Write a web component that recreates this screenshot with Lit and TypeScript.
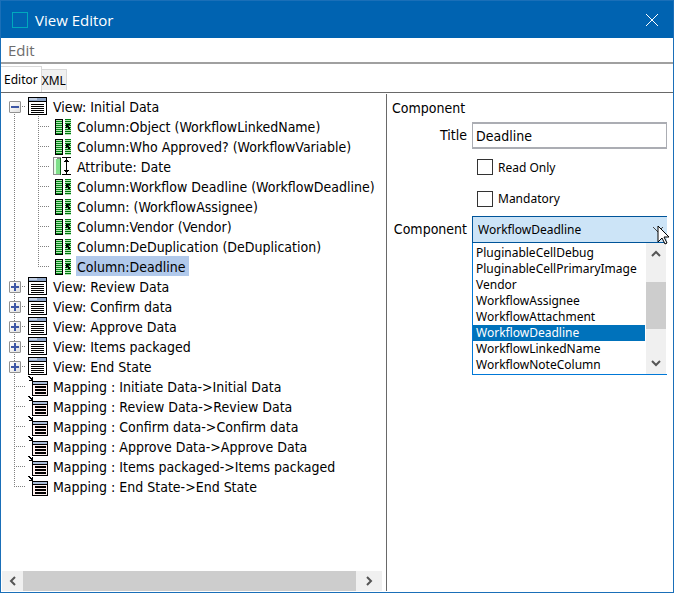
import { LitElement, html, css, svg, nothing } from "lit";
import { customElement, property, state } from "lit/decorators.js";

type IconName = "view" | "column" | "attribute" | "mapping";

interface Node {
  label: string;
  icon: IconName;
  children?: Node[];
  open?: boolean;
}

const TREE: Node[] = [
  {
    label: "View: Initial Data",
    icon: "view",
    open: true,
    children: [
      { label: "Column:Object (WorkflowLinkedName)", icon: "column" },
      { label: "Column:Who Approved? (WorkflowVariable)", icon: "column" },
      { label: "Attribute: Date", icon: "attribute" },
      { label: "Column:Workflow Deadline (WorkflowDeadline)", icon: "column" },
      { label: "Column: (WorkflowAssignee)", icon: "column" },
      { label: "Column:Vendor (Vendor)", icon: "column" },
      { label: "Column:DeDuplication (DeDuplication)", icon: "column" },
      { label: "Column:Deadline", icon: "column" },
    ],
  },
  { label: "View: Review Data", icon: "view", children: [] },
  { label: "View: Confirm data", icon: "view", children: [] },
  { label: "View: Approve Data", icon: "view", children: [] },
  { label: "View: Items packaged", icon: "view", children: [] },
  { label: "View: End State", icon: "view", children: [] },
  { label: "Mapping : Initiate Data->Initial Data", icon: "mapping" },
  { label: "Mapping : Review Data->Review Data", icon: "mapping" },
  { label: "Mapping : Confirm data->Confirm data", icon: "mapping" },
  { label: "Mapping : Approve Data->Approve Data", icon: "mapping" },
  { label: "Mapping : Items packaged->Items packaged", icon: "mapping" },
  { label: "Mapping : End State->End State", icon: "mapping" },
];

const COMPONENTS = [
  "PluginableCellDebug",
  "PluginableCellPrimaryImage",
  "Vendor",
  "WorkflowAssignee",
  "WorkflowAttachment",
  "WorkflowDeadline",
  "WorkflowLinkedName",
  "WorkflowNoteColumn",
];

const ICONS = {
  view: svg`
    <rect x="0" y="1" width="19" height="18" fill="#000"/>
    <rect x="1" y="2" width="17" height="3" fill="#8fa6c8"/>
    <rect x="1" y="2" width="8" height="2" fill="#c3d0e4"/>
    <rect x="1" y="6" width="17" height="12" fill="#fff"/>
    <path d="M3 8.5h13M3 10.5h13M3 12.5h13M3 14.5h13M3 16.5h13" stroke="#000"/>`,
  column: svg`
    <rect x="3" y="3" width="8" height="16" fill="#000"/>
    <rect x="4" y="4" width="6" height="14" fill="#b4e6b4"/>
    <path d="M4 5.5h6M4 7.5h6M4 9.5h6M4 11.5h6M4 13.5h6M4 15.5h6M4 17.5h6" stroke="#008a14"/>
    <rect x="13" y="3" width="6" height="16" fill="#b4e6b4"/>
    <path d="M13 3.5h6M13 5.5h6M13 7.5h6M13 9.5h6M13 11.5h6M13 13.5h6M13 15.5h6M13 17.5h6" stroke="#007a10"/>
    <path d="M14 8h4v1h-2v1h1v1h1v2h-2v-2h-1v1h-1z" fill="#000"/>`,
  attribute: svg`
    <rect x="1" y="1" width="8" height="18" fill="#8c8c8c"/>
    <rect x="2" y="2" width="3" height="16" fill="#fff"/>
    <rect x="3" y="3" width="5" height="15" fill="#7fe08a"/>
    <rect x="2" y="3" width="2" height="15" fill="#e4fbe6"/>
    <rect x="8" y="2" width="1" height="17" fill="#0a5a14"/>
    <path d="M10 1.5h9M10 18.5h9" stroke="#000"/>
    <path d="M14.5 2v16M13 4.5h3M12 5.5h5M13 15.5h3M12 14.5h5" stroke="#000"/>`,
  mapping: svg`
    <path d="M0 0h2v1h-2zM1 1h2v1h-2zM2 2h2v1h-2zM4 1h1v4h-4v-1h2v-1h1z" fill="#000"/>
    <rect x="4" y="5" width="16" height="15" fill="#000"/>
    <rect x="5" y="6" width="14" height="2" fill="#a9bcd8"/>
    <rect x="5" y="9" width="14" height="10" fill="#fff0ee"/>
    <path d="M7 11h11M7 14h11M7 17h11" stroke="#000" stroke-width="2"/>`,
};

const chevron = (d: string) => html`
  <svg class="chevron" viewBox="0 0 10 10" aria-hidden="true">
    <path d=${d} fill="none" stroke="#555" stroke-width="2" />
  </svg>`;

@customElement("view-tree")
class ViewTree extends LitElement {
  @property({ attribute: false }) nodes: Node[] = [];
  @state() private selected = "Column:Deadline";

  static styles = css`
    :host { display: block; overflow: hidden; }
    ul { margin: 0; padding: 0; list-style: none; }
    .row { display: flex; height: 20px; }
    .guide {
      position: relative;
      flex: none;
      width: 27px;
      background:
        repeating-linear-gradient(#808080 0 1px, transparent 1px 2px) 13px 0 / 1px 20px no-repeat,
        repeating-linear-gradient(90deg, #808080 0 1px, transparent 1px 2px) 13px 10px / 12px 1px no-repeat;
    }
    .guide.first { background-position: 13px 10px, 13px 10px; }
    .guide.last { background-size: 1px 10px, 12px 1px; }
    .guide.through { background-size: 1px 20px, 0 0; }
    .guide.child { width: 24px; background-position: 10px 0, 10px 10px; }
    .toggle {
      position: absolute;
      left: 8px;
      top: 5px;
      width: 12px;
      height: 12px;
      padding: 0;
      border: 1px solid #919191;
      border-radius: 1px;
      background: linear-gradient(135deg, #fff, #e0e0e0);
    }
    .toggle svg { display: block; width: 10px; height: 10px; }
    .icon { flex: none; width: 20px; height: 20px; }
    .label {
      margin: 0 0 0 4px;
      padding: 2px 4px 0 1px;
      border: 0;
      background: none;
      color: #000;
      font: inherit;
      line-height: 18px;
      white-space: nowrap;
    }
    .label.selected { background: #b1c9eb; }
  `;

  private row(n: Node, guide: unknown) {
    return html`
      <div class="row">
        ${guide}
        <svg class="icon" viewBox="0 0 20 20" shape-rendering="crispEdges" aria-hidden="true">${ICONS[n.icon]}</svg>
        <button
          class="label ${this.selected === n.label ? "selected" : ""}"
          @click=${() => (this.selected = n.label)}
        >${n.label}</button>
      </div>`;
  }

  private toggle(n: Node) {
    n.open = !n.open;
    this.requestUpdate();
  }

  private root(n: Node, i: number) {
    const edge = i === 0 ? "first" : i === this.nodes.length - 1 ? "last" : "";
    const guide = html`
      <span class="guide ${edge}">
        ${n.children
          ? html`<button class="toggle" aria-label="Toggle ${n.label}" @click=${() => this.toggle(n)}>
              <svg viewBox="0 0 10 10" shape-rendering="crispEdges">
                <path d=${n.open ? "M1 5h8" : "M1 5h8M5 1v8"} stroke="#3c56a5" stroke-width="2" />
              </svg>
            </button>`
          : nothing}
      </span>`;
    const kids = n.children ?? [];
    return html`
      <li role="treeitem">
        ${this.row(n, guide)}
        ${n.open
          ? html`<ul role="group">
              ${kids.map(
                (k, j) => html`<li role="treeitem">
                  ${this.row(
                    k,
                    html`<span class="guide through"></span
                      ><span class="guide child ${j === kids.length - 1 ? "last" : ""}"></span>`
                  )}
                </li>`
              )}
            </ul>`
          : nothing}
      </li>`;
  }

  render() {
    return html`<ul role="tree">${this.nodes.map((n, i) => this.root(n, i))}</ul>`;
  }
}

@customElement("component-picker")
class ComponentPicker extends LitElement {
  @state() private value = "WorkflowDeadline";

  static styles = css`
    :host { display: block; position: relative; font: 12px "Noto Sans", "Open Sans", sans-serif; }
    .combo {
      display: block;
      box-sizing: border-box;
      width: 100%;
      height: 27px;
      padding: 0 5px;
      border: 1px solid #005499;
      border-right: 0;
      border-radius: 0;
      appearance: none;
      background: #cce4f7;
      color: #000;
      font: inherit;
      outline: 0;
    }
    .arrow { position: absolute; right: 4px; top: 8px; width: 10px; height: 10px; pointer-events: none; }
    .pointer { position: absolute; right: -3px; top: 9px; width: 13px; height: 20px; z-index: 1; pointer-events: none; }
    .popup {
      display: flex;
      border: 1px solid #0078d7;
      border-top: 0;
      border-right: 0;
      background: #fff;
    }
    .list { flex: 1; margin: 0; padding: 2px 1px 1px 0; list-style: none; }
    .option { padding-left: 3px; line-height: 16px; white-space: nowrap; }
    .option.selected { background: #0072bb; color: #fff; }
    .bar { display: flex; flex-direction: column; width: 20px; margin-right: 1px; background: #f0f0f0; }
    .thumb { height: 47px; background: #cdcdcd; }
    .step { display: grid; place-items: center; padding: 0; border: 0; background: none; height: 22px; }
    .up { margin-bottom: 17px; }
    .down { margin-top: auto; }
    .chevron { width: 10px; height: 10px; }
  `;

  render() {
    return html`
      <select class="combo" aria-label="Component" .value=${this.value}>
        ${COMPONENTS.map((c) => html`<option ?selected=${c === this.value}>${c}</option>`)}
      </select>
      <svg class="arrow" viewBox="0 0 10 10" aria-hidden="true"><path d="M0 3l5 5 5-5" fill="none" stroke="#444" /></svg>
      <svg class="pointer" viewBox="0 0 13 20" aria-hidden="true">
        <path d="M1 1v16l4-4 3 6 2-1-3-6h5z" fill="#fff" stroke="#000" />
      </svg>
      <div class="popup">
        <ul class="list" role="listbox" aria-label="Component">
          ${COMPONENTS.map(
            (c) => html`<li
              class="option ${c === this.value ? "selected" : ""}"
              role="option"
              aria-selected=${c === this.value}
              @click=${() => (this.value = c)}
            >${c}</li>`
          )}
        </ul>
        <div class="bar">
          <button class="step up" aria-label="Scroll up">${chevron("M1 7l4-4 4 4")}</button>
          <div class="thumb"></div>
          <button class="step down" aria-label="Scroll down">${chevron("M1 3l4 4 4-4")}</button>
        </div>
      </div>`;
  }
}

@customElement("app-root")
class AppRoot extends LitElement {
  static styles = css`
    :host {
      display: flex;
      flex-direction: column;
      box-sizing: border-box;
      min-height: 100vh;
      margin-right: 2px;
      border: 1px solid #1a6fb8;
      background: #fff;
      color: #000;
      font: 14px "DejaVu Sans Condensed", "Noto Sans", sans-serif;
    }
    .titlebar { display: flex; align-items: center; height: 37px; padding: 0 14px 0 10px; background: #0063b1; color: #fff; }
    .logo { width: 18px; height: 18px; }
    .title { flex: 1; margin: 0 0 0 6px; font: 15px "Open Sans", "Noto Sans", sans-serif; }
    .close { display: grid; padding: 0; border: 0; background: none; }
    .close svg { width: 14px; height: 14px; }
    .menubar { display: flex; height: 24px; border-bottom: 2px solid #a0a0a0; }
    .menu { padding: 0 7px; border: 0; background: none; color: #6d6d6d; font: 15px "Open Sans", "Noto Sans", sans-serif; }
    .tabs { display: flex; align-items: flex-end; height: 28px; border-bottom: 1px solid #696969; font: 12px "Noto Sans", "Open Sans", sans-serif; }
    .tab { height: 21px; margin-bottom: 2px; padding: 0; border: 1px solid #d9d9d9; border-left: 0; border-bottom: 0; background: #f0f0f0; color: #000; font: inherit; }
    .tab.active { height: 26px; margin-bottom: 0; padding: 0 3px; background: #fff; }
    .body { display: flex; flex: 1; padding-top: 1px; }
    .left { display: flex; flex-direction: column; flex: 1; min-width: 0; }
    .left view-tree { flex: 1; padding-top: 2px; }
    .hscroll { display: flex; height: 20px; margin: 0 4px 1px 1px; background: #f0f0f0; }
    .hscroll button { display: grid; place-items: center; width: 21px; padding: 0; border: 0; background: none; }
    .hscroll .thumb { flex: 1; background: #cdcdcd; }
    .hscroll .right { width: 26px; }
    .chevron { width: 10px; height: 10px; }
    .form {
      display: grid;
      grid-template-columns: 75px 1fr;
      grid-template-rows: 28px 27px 36px 27px auto;
      column-gap: 5px;
      align-content: start;
      flex: 0 0 275px;
      margin-bottom: 1px;
      padding: 0 6px 0 5px;
      border-left: 1px solid #696969;
    }
    .heading { grid-column: 1 / -1; margin: 0; font-size: 14px; font-weight: 400; line-height: 29px; }
    .name { line-height: 27px; text-align: right; }
    .text { box-sizing: border-box; width: 100%; height: 27px; padding: 0 3px; border: solid #abadb3; border-width: 2px 1px; font: inherit; outline: 0; }
    .check { display: flex; grid-column: 2; align-items: center; gap: 5px; padding-left: 5px; font: 12px "Noto Sans", "Open Sans", sans-serif; }
    .check input { width: 16px; height: 16px; margin: 0; border: 1px solid #333; background: #fff; appearance: none; }
    .picker { display: contents; }
    .picker > * { margin-top: 4px; }
  `;

  render() {
    return html`
      <header class="titlebar">
        <svg class="logo" viewBox="0 0 18 18" aria-hidden="true">
          <rect x="1.5" y="1.5" width="15" height="15" fill="none" stroke="#00a9bd" />
        </svg>
        <h1 class="title">View Editor</h1>
        <button class="close" aria-label="Close">
          <svg viewBox="0 0 14 14"><path d="M1 1l12 12M13 1L1 13" stroke="#fff" /></svg>
        </button>
      </header>
      <nav class="menubar"><button class="menu">Edit</button></nav>
      <div class="tabs" role="tablist">
        <button class="tab active" role="tab" aria-selected="true">Editor</button>
        <button class="tab" role="tab" aria-selected="false">XML</button>
      </div>
      <main class="body">
        <section class="left">
          <view-tree .nodes=${TREE}></view-tree>
          <div class="hscroll">
            <button aria-label="Scroll left">${chevron("M7 1L3 5l4 4")}</button>
            <div class="thumb"></div>
            <button class="right" aria-label="Scroll right">${chevron("M3 1l4 4-4 4")}</button>
          </div>
        </section>
        <section class="form">
          <h2 class="heading">Component</h2>
          <label class="name" for="title">Title</label>
          <input class="text" id="title" type="text" value="Deadline" />
          <label class="check"><input type="checkbox" />Read Only</label>
          <label class="check"><input type="checkbox" />Mandatory</label>
          <div class="picker">
            <span class="name">Component</span>
            <component-picker></component-picker>
          </div>
        </section>
      </main>`;
  }
}
